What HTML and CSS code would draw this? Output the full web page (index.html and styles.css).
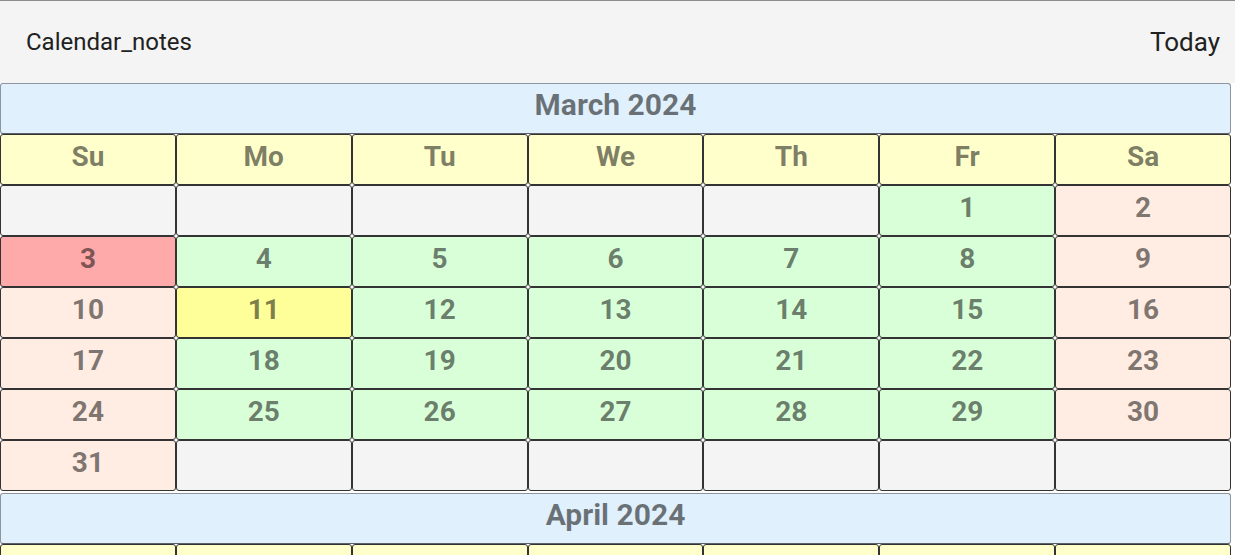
FILE: index.html
```html
<!DOCTYPE html>
<html>
<head>
<meta charset="utf-8">
<link rel="stylesheet" href="styles.css">
</head>
<body>
<header class="appbar">
  <div class="title">Calendar_notes</div>
  <div class="today-btn">Today</div>
</header>
<main class="calendar">
  <section class="month">
    <div class="month-name">March 2024</div>
    <div class="cell wd">Su</div><div class="cell wd">Mo</div><div class="cell wd">Tu</div><div class="cell wd">We</div><div class="cell wd">Th</div><div class="cell wd">Fr</div><div class="cell wd">Sa</div>
    <div class="cell empty"></div><div class="cell empty"></div><div class="cell empty"></div><div class="cell empty"></div><div class="cell empty"></div><div class="cell work">1</div><div class="cell weekend">2</div>
    <div class="cell marked">3</div><div class="cell work">4</div><div class="cell work">5</div><div class="cell work">6</div><div class="cell work">7</div><div class="cell work">8</div><div class="cell weekend">9</div>
    <div class="cell weekend">10</div><div class="cell today">11</div><div class="cell work">12</div><div class="cell work">13</div><div class="cell work">14</div><div class="cell work">15</div><div class="cell weekend">16</div>
    <div class="cell weekend">17</div><div class="cell work">18</div><div class="cell work">19</div><div class="cell work">20</div><div class="cell work">21</div><div class="cell work">22</div><div class="cell weekend">23</div>
    <div class="cell weekend">24</div><div class="cell work">25</div><div class="cell work">26</div><div class="cell work">27</div><div class="cell work">28</div><div class="cell work">29</div><div class="cell weekend">30</div>
    <div class="cell weekend">31</div><div class="cell empty"></div><div class="cell empty"></div><div class="cell empty"></div><div class="cell empty"></div><div class="cell empty"></div><div class="cell empty"></div>
  </section>
  <section class="month">
    <div class="month-name">April 2024</div>
    <div class="cell wd">Su</div><div class="cell wd">Mo</div><div class="cell wd">Tu</div><div class="cell wd">We</div><div class="cell wd">Th</div><div class="cell wd">Fr</div><div class="cell wd">Sa</div>
  </section>
</main>
</body>
</html>
```

FILE: styles.css
```css
html, body {
  margin: 0;
  padding: 0;
  background: #ffffff;
  overflow: hidden;
}
body {
  font-family: Roboto, "Liberation Sans", sans-serif;
}
.appbar {
  box-sizing: border-box;
  height: 83px;
  display: flex;
  align-items: center;
  justify-content: space-between;
  padding: 0 15px 0 26px;
  background: #f4f4f4;
  border-top: 1px solid #8c8c8c;
  color: #212121;
}
.title {
  font-size: 24px;
  font-weight: 400;
}
.today-btn {
  font-size: 26px;
  font-weight: 400;
}
.calendar {
  width: calc(100% - 4px);
}
.month {
  display: grid;
  grid-template-columns: repeat(7, 1fr);
}
.month + .month {
  margin-top: 2px;
}
.month-name {
  grid-column: 1 / -1;
  box-sizing: border-box;
  height: 51px;
  display: flex;
  align-items: center;
  justify-content: center;
  padding-bottom: 8px;
  background: #e0f0fc;
  border: 1px solid #8e959c;
  border-bottom-color: #5d6166;
  border-radius: 3px;
  font-size: 30px;
  font-weight: 700;
  color: rgba(0, 0, 0, 0.53);
}
.cell {
  box-sizing: border-box;
  height: 51px;
  display: flex;
  align-items: center;
  justify-content: center;
  padding-bottom: 7px;
  border: 1px solid #333333;
  border-radius: 3px;
  font-size: 28px;
  font-weight: 700;
  color: rgba(0, 0, 0, 0.52);
}
.wd { background: #ffffcc; }
.empty { background: #f4f4f4; }
.work { background: #d9ffd9; }
.weekend { background: #ffece2; }
.marked { background: #ffaaaa; }
.today { background: #ffff99; }
```
